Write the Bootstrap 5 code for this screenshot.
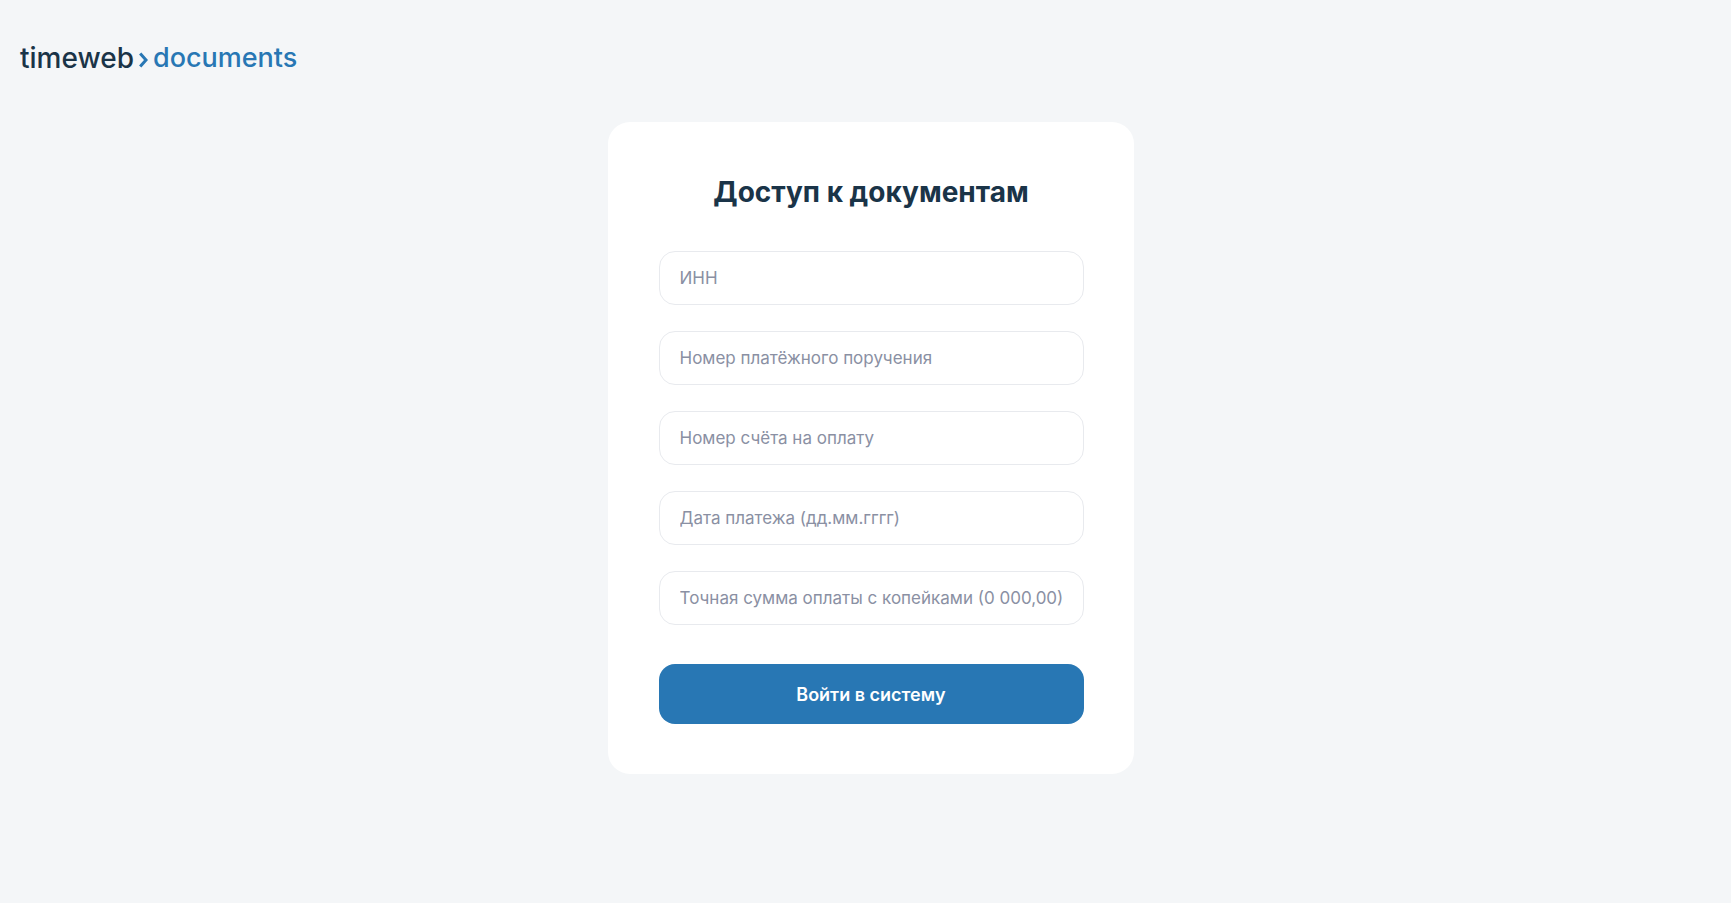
<!DOCTYPE html>
<html lang="ru">
<head>
<meta charset="utf-8">
<meta name="viewport" content="width=device-width, initial-scale=1">
<title>Доступ к документам</title>
<link rel="stylesheet" href="https://cdn.jsdelivr.net/npm/bootstrap@5.3.0/dist/css/bootstrap.min.css">
<style>
  body { background: #f4f6f8; color: #1a3448; font-family: Inter, Roboto, sans-serif; }
  .site-header { padding: 40px 20px 0; height: 122px; }
  .logo { color: #1a3448; font-size: 28px; line-height: 36px; font-weight: 500; }
  .logo-product { color: #2877b4; font-size: 27px; }
  .logo svg { margin: 4px 5px 0 5px; }
  .login-area { padding-left: 10px; }
  .login-card { width: 100%; max-width: 526px; padding: 50px 50px 50px 51px; border: 0; border-radius: 22px; }
  .login-title { margin: 0 0 39px; font-size: 28px; line-height: 40px; font-weight: 700; }
  .login-fields { gap: 26px; }
  .login-input { height: 54px; padding: 0 8px 0 20px; border: 1px solid #e8eaee; border-radius: 16px; font-size: 17px; color: #1a3448; background: #fff; }
  .login-input::placeholder { color: #8a90a3; opacity: 1; }
  .login-submit { height: 60px; margin-top: 39px; border: 0; border-radius: 16px; background: #2877b4; font-size: 18px; font-weight: 600; }
</style>
</head>
<body>
<header class="site-header">
  <a class="logo d-inline-flex align-items-center text-decoration-none" href="#" aria-label="timeweb documents">
    <span>timeweb</span>
    <svg width="9" height="16" viewBox="0 0 9 16" fill="none" stroke="#2877b4" stroke-width="3" aria-hidden="true"><path d="M1.2 1.4 7 8l-5.8 6.6"/></svg>
    <span class="logo-product">documents</span>
  </a>
</header>
<main class="login-area d-flex justify-content-center">
  <form class="login-card card">
    <h1 class="login-title text-center">Доступ к документам</h1>
    <div class="login-fields d-flex flex-column">
      <input class="form-control login-input" type="text" aria-label="ИНН" placeholder="ИНН">
      <input class="form-control login-input" type="text" aria-label="Номер платёжного поручения" placeholder="Номер платёжного поручения">
      <input class="form-control login-input" type="text" aria-label="Номер счёта на оплату" placeholder="Номер счёта на оплату">
      <input class="form-control login-input" type="text" aria-label="Дата платежа" placeholder="Дата платежа (дд.мм.гггг)">
      <input class="form-control login-input" type="text" aria-label="Точная сумма оплаты с копейками" placeholder="Точная сумма оплаты с копейками (0 000,00)">
    </div>
    <button class="btn btn-primary login-submit w-100" type="submit">Войти в систему</button>
  </form>
</main>
<script src="https://cdn.jsdelivr.net/npm/bootstrap@5.3.0/dist/js/bootstrap.bundle.min.js"></script>
</body>
</html>
